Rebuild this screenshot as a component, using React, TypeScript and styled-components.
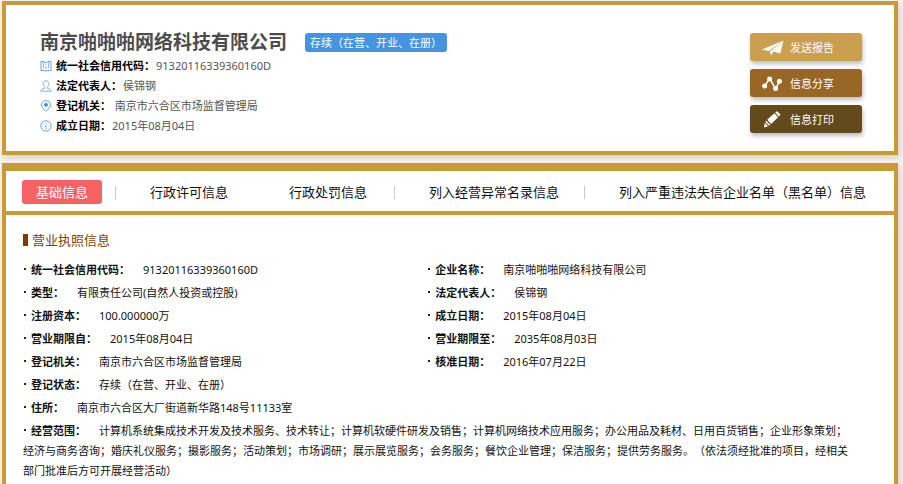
import React from "react";
import styled, { createGlobalStyle } from "styled-components";

const GlobalStyle = createGlobalStyle`
  html { scrollbar-width: none; }
  body {
    margin: 0;
    background: #f4f1ea;
    color: #111;
    font: 11px/20px "Noto Sans", "Noto Sans CJK SC", sans-serif;
    text-spacing-trim: space-all;
  }
  h1, h2, dl, dt, dd { margin: 0; }
`;

const gold = "#c99a36";

const Page = styled.main`
  display: flex;
  flex-direction: column;
  gap: 8px;
  padding: 1px 5px 0 2px;
`;

const Card = styled.section`
  border: 4px solid ${gold};
  background: #fff;
  box-shadow: 2px 3px 5px rgba(0, 0, 0, 0.12);
`;

const Summary = styled(Card)`
  display: flex;
  justify-content: space-between;
  align-items: flex-start;
  padding: 24px 32px 15px 34px;
`;

const TitleRow = styled.div`
  display: flex;
  align-items: center;
  gap: 18px;
`;

const Title = styled.h1`
  color: #4c4c4c;
  font-size: 19px;
  line-height: 27px;
`;

const Status = styled.span`
  padding: 0 5px;
  border-radius: 3px;
  background: #4494e2;
  color: #fff;
  line-height: 19px;
`;

const SummaryRow = styled.div`
  display: flex;
  align-items: center;

  svg { width: 12px; height: 12px; margin-right: 4px; }
  dt { margin-right: 1px; color: #000; font-weight: 700; }
  dd { color: #555; }
`;

const Actions = styled.div`
  display: flex;
  flex-direction: column;
  gap: 8px;
  padding-top: 4px;
`;

const Action = styled.button<{ $color: string }>`
  display: flex;
  align-items: center;
  gap: 6px;
  width: 112px;
  height: 28px;
  padding: 1px 12px 0;
  border: 0;
  border-radius: 3px;
  background: ${(p) => p.$color};
  box-shadow: 1px 3px 4px rgba(0, 0, 0, 0.25);
  color: #fff;
  font: inherit;
  cursor: pointer;

  svg { width: 22px; height: 20px; }
`;

const Details = styled(Card)`
  border-top-width: 8px;
  border-bottom: 0;
`;

const Tabs = styled.nav`
  display: flex;
  align-items: center;
  height: 38px;
  padding: 2px 16px 0;
  border-bottom: 4px solid ${gold};
  font-size: 13px;
  white-space: nowrap;
`;

const Tab = styled.button<{ $active?: boolean; $gap?: number }>`
  height: 24px;
  margin: 0 0 0 ${(p) => p.$gap || 0}px;
  padding: 0 ${(p) => (p.$active ? 14 : 0)}px;
  border: 0;
  border-radius: 3px;
  background: ${(p) => (p.$active ? "#f86264" : "transparent")};
  color: ${(p) => (p.$active ? "#fff" : "#111")};
  font: inherit;
  cursor: pointer;
`;

const Divider = styled.span<{ $gap: number }>`
  width: 1px;
  height: 13px;
  margin: 0 34px 0 ${(p) => p.$gap}px;
  background: #c8c8c8;
`;

const Body = styled.div`
  padding: 15px 29px 20px 17px;
`;

const Heading = styled.h2`
  display: flex;
  align-items: center;
  gap: 4px;
  margin-bottom: 10px;
  color: #7d4309;
  font-size: 13px;
  font-weight: 400;

  &::before {
    content: "";
    width: 5px;
    height: 12px;
    background: #803c00;
  }
`;

const Fields = styled.dl`
  display: grid;
  grid-template-columns: 48% 52%;
  row-gap: 3px;
`;

const Field = styled.div<{ $wide?: boolean }>`
  grid-column: ${(p) => (p.$wide ? "1 / -1" : "auto")};
  padding-right: ${(p) => (p.$wide ? 13 : 0)}px;

  &::before {
    content: "";
    display: inline-block;
    width: 2px;
    height: 2px;
    margin: 0 5px 4px 1px;
    background: #222;
  }
  dt { display: inline; margin-right: 13px; font-weight: 700; }
  dd { display: inline; }
`;

const lineIcon = {
  viewBox: "0 0 12 12",
  fill: "none",
  stroke: "#64a5e5",
  "aria-hidden": true,
} as const;

const BookIcon = () => (
  <svg {...lineIcon}>
    <path d="M1 1.5H3.5L6 2.8 8.5 1.5H11V10.5H7.2L6 11.3 4.8 10.5H1Z" />
    <path d="M3.4 1.5V8.4M8.6 1.5V8.4M6 4V5M6 6V9" strokeWidth=".8" />
  </svg>
);

const PersonIcon = () => (
  <svg {...lineIcon} stroke="#7db3e8">
    <path d="M4.7 7.3C3.5 6.5 3.1 5.2 3.1 3.8 3.1 2 4.3.8 6 .8S8.9 2 8.9 3.8C8.9 5.2 8.5 6.5 7.3 7.3V8.2L10.2 9.4C11 9.8 11.3 10.4 11.3 11.2H.7C.7 10.4 1 9.8 1.8 9.4L4.7 8.2Z" />
  </svg>
);

const PinIcon = () => (
  <svg {...lineIcon}>
    <path d="M6 11.3C3.9 8.9 1.4 7 1.4 4.9A4.6 4.2 0 0 1 10.6 4.9C10.6 7 8.1 8.9 6 11.3Z" />
    <circle cx="6" cy="4.8" r="1.9" fill="#328ce0" stroke="none" />
  </svg>
);

const InfoIcon = () => (
  <svg {...lineIcon}>
    <circle cx="6" cy="6" r="5.2" />
    <path d="M6 3V4.2M6 5.2V9" />
  </svg>
);

const PlaneIcon = () => (
  <svg viewBox="0 0 22 20" fill="#fff" aria-hidden>
    <path d="M0 11.5 21.5 2.5 7 13Z" />
    <path d="M21.5 2.5 18.3 15.5 11.5 13.6Z" />
    <path d="M8 13.4 21.5 2.5 11 14.2 9.2 17.5Z" />
  </svg>
);

const ShareIcon = () => (
  <svg viewBox="0 0 22 20" fill="#fff" aria-hidden>
    <path d="M2.6 12.1 7.6 4.7 13.6 14.7 17.6 7.2" fill="none" stroke="#fff" strokeWidth="1.5" />
    <circle cx="2.6" cy="12.1" r="2.5" />
    <circle cx="7.6" cy="4.9" r="2.5" />
    <circle cx="13.6" cy="14.5" r="2.5" />
    <circle cx="17.4" cy="7.2" r="2.5" />
  </svg>
);

const PencilIcon = () => (
  <svg viewBox="0 0 22 20" fill="#fff" aria-hidden>
    <path d="M5.2 9.7 12.4 3.3 16.1 7.2 9.1 14.1Z" />
    <path d="M13.2 2.6 14.3 1.6Q15 1 15.7 1.7L18 4.1Q18.6 4.8 18 5.5L16.9 6.5Z" />
    <path d="M4.2 10.7 8.2 14.8 7.1 15.8 3.2 11.8Z" />
    <path d="M2.8 12.8 6.1 16.2 2 17.5Z" />
  </svg>
);

const summary = [
  { icon: <BookIcon />, label: "统一社会信用代码：", value: "91320116339360160D" },
  { icon: <PersonIcon />, label: "法定代表人：", value: "侯锦钢" },
  { icon: <PinIcon />, label: "登记机关：", value: "\u00a0南京市六合区市场监督管理局" },
  { icon: <InfoIcon />, label: "成立日期：", value: "2015年08月04日" },
];

const fields: { label: string; value: string; wide?: boolean }[] = [
  { label: "统一社会信用代码：", value: "91320116339360160D" },
  { label: "企业名称：", value: "南京啪啪啪网络科技有限公司" },
  { label: "类型：", value: "有限责任公司(自然人投资或控股)" },
  { label: "法定代表人：", value: "侯锦钢" },
  { label: "注册资本：", value: "100.000000万" },
  { label: "成立日期：", value: "2015年08月04日" },
  { label: "营业期限自：", value: "2015年08月04日" },
  { label: "营业期限至：", value: "2035年08月03日" },
  { label: "登记机关：", value: "南京市六合区市场监督管理局" },
  { label: "核准日期：", value: "2016年07月22日" },
  { label: "登记状态：", value: "存续（在营、开业、在册）", wide: true },
  { label: "住所：", value: "南京市六合区大厂街道新华路148号11133室", wide: true },
  {
    label: "经营范围：",
    value:
      "计算机系统集成技术开发及技术服务、技术转让；计算机软硬件研发及销售；计算机网络技术应用服务；办公用品及耗材、日用百货销售；企业形象策划；经济与商务咨询；婚庆礼仪服务；摄影服务；活动策划；市场调研；展示展览服务；会务服务；餐饮企业管理；保洁服务；提供劳务服务。（依法须经批准的项目，经相关部门批准后方可开展经营活动）",
    wide: true,
  },
];

export default function App() {
  return (
    <>
      <GlobalStyle />
      <Page>
        <Summary>
          <div>
            <TitleRow>
              <Title>南京啪啪啪网络科技有限公司</Title>
              <Status>存续（在营、开业、在册）</Status>
            </TitleRow>
            <dl>
              {summary.map((s) => (
                <SummaryRow key={s.label}>
                  {s.icon}
                  <dt>{s.label}</dt>
                  <dd>{s.value}</dd>
                </SummaryRow>
              ))}
            </dl>
          </div>
          <Actions>
            <Action $color="#cb9f50"><PlaneIcon />发送报告</Action>
            <Action $color="#986726"><ShareIcon />信息分享</Action>
            <Action $color="#63491b"><PencilIcon />信息打印</Action>
          </Actions>
        </Summary>

        <Details>
          <Tabs>
            <Tab $active>基础信息</Tab>
            <Divider $gap={13} />
            <Tab>行政许可信息</Tab>
            <Tab $gap={61}>行政处罚信息</Tab>
            <Divider $gap={27} />
            <Tab>列入经营异常名录信息</Tab>
            <Divider $gap={25} />
            <Tab>列入严重违法失信企业名单（黑名单）信息</Tab>
          </Tabs>
          <Body>
            <Heading>营业执照信息</Heading>
            <Fields>
              {fields.map((f) => (
                <Field key={f.label} $wide={f.wide}>
                  <dt>{f.label}</dt>
                  <dd>{f.value}</dd>
                </Field>
              ))}
            </Fields>
          </Body>
        </Details>
      </Page>
    </>
  );
}
